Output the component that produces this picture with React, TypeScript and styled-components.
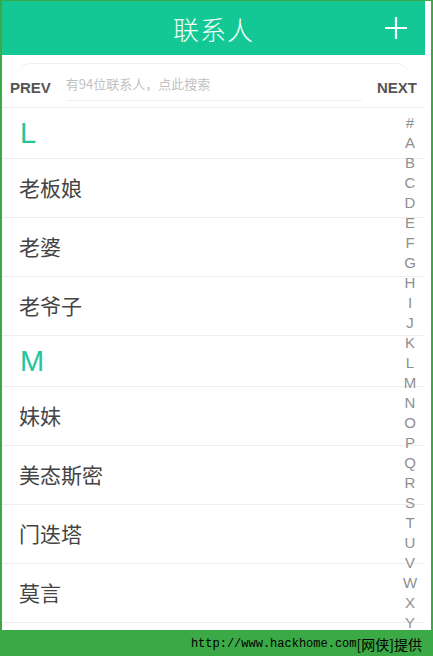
import React from 'react'
import styled, { createGlobalStyle } from 'styled-components'

const GlobalStyle = createGlobalStyle`
  html, body {
    margin: 0;
    padding: 0;
    background: #3ba946;
  }
  * {
    box-sizing: border-box;
  }
`

const Frame = styled.div`
  display: flex;
  flex-direction: column;
  width: 433px;
  height: 656px;
  padding-top: 1px;
  overflow: hidden;
`

const Screen = styled.div`
  flex: 1;
  display: flex;
  flex-direction: column;
  margin: 0 2px;
  padding-right: 6px;
  background: #fff;
  overflow: hidden;
  font-family: "Noto Sans CJK SC", "Liberation Sans", sans-serif;
`

const Header = styled.div`
  display: grid;
  grid-template-columns: 1fr auto 1fr;
  align-items: center;
  height: 54px;
  padding: 0 17px;
  background: #13c895;
`

const Title = styled.h1`
  grid-column: 2;
  margin: 0;
  font-size: 26px;
  font-weight: 300;
  letter-spacing: 1px;
  color: #f2fffa;
`

const AddButton = styled.div`
  justify-self: end;
  display: flex;
  width: 24px;
  height: 24px;
`

const SearchBar = styled.div`
  position: relative;
  display: flex;
  align-items: center;
  height: 53px;
  padding: 10px 8px 0 8px;
  border-bottom: 1px solid #ececec;

  &::before {
    content: '';
    position: absolute;
    left: 15px;
    right: 15px;
    top: 8px;
    height: 14px;
    border-top: 1px solid #f0f0f0;
    border-radius: 14px 14px 0 0;
  }
`

const NavButton = styled.span`
  font-family: "Liberation Sans", Arial, sans-serif;
  font-size: 15px;
  font-weight: 700;
  color: #555;
  margin-top: 2px;
`

const SearchField = styled.div`
  flex: 1;
  align-self: stretch;
  display: flex;
  align-items: center;
  margin: 0 15px 6px;
  border-bottom: 1px solid #efefef;
  font-size: 13px;
  color: #c2c2c2;
  white-space: nowrap;
  overflow: hidden;
  padding-top: 2px;
`

const List = styled.div`
  position: relative;
  flex: 1;
  overflow: hidden;
`

const SectionHeader = styled.div`
  display: flex;
  align-items: center;
  height: 51px;
  padding-left: 18px;
  border-bottom: 1px solid #eeeeee;
  font-family: "Liberation Sans", Arial, sans-serif;
  font-size: 29px;
  color: #25c49a;
`

const ContactRow = styled.div`
  display: flex;
  align-items: center;
  height: 59px;
  padding: 0 0 3px 17px;
  border-bottom: 1px solid #eeeeee;
  font-size: 21px;
  color: #444;
`

const IndexBar = styled.div`
  position: absolute;
  top: 5px;
  right: 0;
  width: 30px;
  display: flex;
  flex-direction: column;
  align-items: center;
  font-family: "Liberation Sans", Arial, sans-serif;
  font-size: 15px;
  line-height: 20px;
  color: #8f8f8f;
`

const Footer = styled.div`
  display: flex;
  align-items: center;
  justify-content: flex-end;
  height: 26px;
  padding: 2px 11px 0 0;
  font-family: "Liberation Mono", monospace;
  font-size: 12px;
  color: #000;
`

const FooterCjk = styled.span`
  font-family: "Noto Sans CJK SC", sans-serif;
  font-size: 14px;
`

const sections = [
  { letter: 'L', names: ['老板娘', '老婆', '老爷子'] },
  { letter: 'M', names: ['妹妹', '美态斯密', '门迭塔', '莫言'] },
]

const letters = ['#', ...'ABCDEFGHIJKLMNOPQRSTUVWXY'.split('')]

const App = () => {
  return (
    <>
      <GlobalStyle />
      <Frame>
        <Screen>
          <Header>
            <Title>联系人</Title>
            <AddButton>
              <svg width="24" height="24" viewBox="0 0 24 24">
                <path d="M12 1v22M1 12h22" stroke="#f4fffb" strokeWidth="2.2" />
              </svg>
            </AddButton>
          </Header>
          <SearchBar>
            <NavButton>PREV</NavButton>
            <SearchField>有94位联系人，点此搜索</SearchField>
            <NavButton>NEXT</NavButton>
          </SearchBar>
          <List>
            {sections.map((s) => (
              <React.Fragment key={s.letter}>
                <SectionHeader>{s.letter}</SectionHeader>
                {s.names.map((n) => (
                  <ContactRow key={n}>{n}</ContactRow>
                ))}
              </React.Fragment>
            ))}
            <IndexBar>
              {letters.map((l) => (
                <span key={l}>{l}</span>
              ))}
            </IndexBar>
          </List>
        </Screen>
        <Footer>
          http://www.hackhome.com<FooterCjk>[网侠]提供</FooterCjk>
        </Footer>
      </Frame>
    </>
  )
}

export default App
